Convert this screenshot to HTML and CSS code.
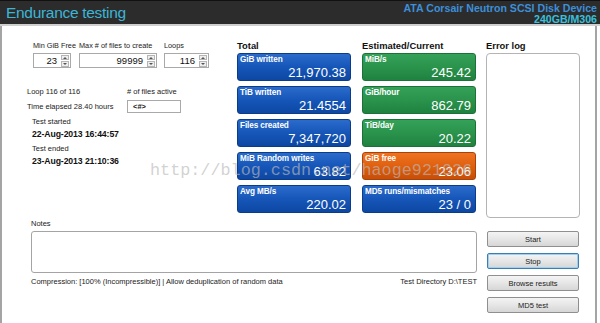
FILE: index.html
```html
<!DOCTYPE html>
<html>
<head>
<meta charset="utf-8">
<link rel="stylesheet" href="styles.css">
</head>
<body>
<div class="window">
  <header class="header">
    <div class="title">Endurance testing</div>
    <div class="device">
      <div class="device-name">ATA Corsair Neutron SCSI Disk Device</div>
      <div class="device-model">240GB/M306</div>
    </div>
  </header>
  <div class="content">
    <div class="top">
      <section class="left">
        <div class="params">
          <div class="param p1">
            <div class="lbl">Min GiB Free</div>
            <div class="spin"><span class="val">23</span><span class="arrows"><i class="up"></i><i class="down"></i></span></div>
          </div>
          <div class="param p2">
            <div class="lbl">Max # of files to create</div>
            <div class="spin"><span class="val">99999</span><span class="arrows"><i class="up"></i><i class="down"></i></span></div>
          </div>
          <div class="param p3">
            <div class="lbl">Loops</div>
            <div class="spin"><span class="val">116</span><span class="arrows"><i class="up"></i><i class="down"></i></span></div>
          </div>
        </div>
        <div class="status">
          <div class="lbl">Loop 116 of 116</div>
          <div class="lbl">&#35; of files active</div>
          <div class="lbl">Time elapsed 28.40 hours</div>
          <div class="active">&lt;#&gt;</div>
        </div>
        <div class="times">
          <div class="lbl">Test started</div>
          <div class="date">22-Aug-2013 16:44:57</div>
          <div class="lbl gap">Test ended</div>
          <div class="date">23-Aug-2013 21:10:36</div>
        </div>
      </section>
      <section class="col total">
        <h2>Total</h2>
        <div class="tile blue"><div class="t">GiB written</div><div class="v">21,970.38</div></div>
        <div class="tile blue"><div class="t">TiB written</div><div class="v">21.4554</div></div>
        <div class="tile blue"><div class="t">Files created</div><div class="v">7,347,720</div></div>
        <div class="tile blue"><div class="t">MiB Random writes</div><div class="v">63.82</div></div>
        <div class="tile blue"><div class="t">Avg MB/s</div><div class="v">220.02</div></div>
      </section>
      <section class="col est">
        <h2>Estimated/Current</h2>
        <div class="tile green"><div class="t">MiB/s</div><div class="v">245.42</div></div>
        <div class="tile green"><div class="t">GiB/hour</div><div class="v">862.79</div></div>
        <div class="tile green"><div class="t">TiB/day</div><div class="v">20.22</div></div>
        <div class="tile orange"><div class="t">GiB free</div><div class="v">23.06</div></div>
        <div class="tile blue"><div class="t">MD5 runs/mismatches</div><div class="v">23 / 0</div></div>
      </section>
      <section class="errors">
        <h2>Error log</h2>
        <div class="errbox"></div>
      </section>
    </div>
    <div class="bottom">
      <div class="notes">
        <div class="lbl">Notes</div>
        <div class="notebox"></div>
        <div class="info">
          <span class="lbl">Compression: [100% (Incompressible)] | Allow deduplication of random data</span>
          <span class="lbl">Test Directory D:\TEST</span>
        </div>
      </div>
      <div class="buttons">
        <button class="btn">Start</button>
        <button class="btn focus">Stop</button>
        <button class="btn">Browse results</button>
        <button class="btn">MD5 test</button>
      </div>
    </div>
    <div class="watermark">http://blog.csdn.net/haoge921026</div>
  </div>
</div>
</body>
</html>
```

FILE: styles.css
```css
* { box-sizing: border-box; }
html, body {
  margin: 0;
  padding: 0;
  width: 600px;
  height: 323px;
  overflow: hidden;
  background: #ffffff;
  font-family: "Liberation Sans", Arial, sans-serif;
  color: #111;
}
.window {
  width: 600px;
  height: 323px;
  display: flex;
  flex-direction: column;
}
.header {
  height: 26px;
  background: #2c2c2c;
  border-top: 1px solid #111;
  border-bottom: 2px solid #cfcfcf;
  display: flex;
  justify-content: space-between;
  align-items: flex-start;
  padding: 0 3px 0 6px;
}
.title {
  color: #3cb6d6;
  font-size: 15.5px;
  letter-spacing: -0.3px;
  line-height: 22px;
  padding-top: 1px;
}
.device {
  text-align: right;
  font-weight: bold;
  padding-top: 2px;
}
.device-name {
  color: #3d8fd8;
  font-size: 10.6px;
  line-height: 10px;
}
.device-model {
  color: #38c0dc;
  font-size: 10.6px;
  line-height: 10px;
  margin-top: 1px;
}
.content {
  flex: 1;
  position: relative;
  border-left: 2px solid #a4a4a4;
  border-right: 2px solid #a4a4a4;
  margin-right: 3px;
  padding: 13px 0 0 25px;
}
.top {
  display: flex;
  height: 179px;
}
.lbl {
  font-size: 7.5px;
  line-height: 12px;
  color: #222;
  white-space: nowrap;
}
.left {
  width: 210px;
}
.params {
  display: flex;
  padding-left: 6px;
}
.param .lbl { line-height: 14px; font-size: 7.3px; }
.p1 { width: 38px; margin-right: 8px; }
.p2 { width: 78px; margin-right: 7px; }
.p3 { width: 45px; }
.spin {
  height: 15px;
  border: 1px solid #a9a9a9;
  display: flex;
  align-items: center;
  justify-content: flex-end;
  padding-right: 1px;
}
.val {
  font-size: 9.5px;
  margin-right: 4px;
}
.arrows {
  width: 8px;
  height: 12px;
  display: flex;
  flex-direction: column;
  gap: 1px;
}
.arrows i {
  flex: 1;
  border: 1px solid #b5b5b5;
  background: #eeeeee;
  position: relative;
}
.arrows i::after {
  content: "";
  position: absolute;
  left: 1px;
  border-left: 2px solid transparent;
  border-right: 2px solid transparent;
}
.arrows .up::after { top: 1px; border-bottom: 2px solid #555; }
.arrows .down::after { top: 1px; border-top: 2px solid #555; }
.status {
  display: grid;
  grid-template-columns: 100px 54px;
  row-gap: 2px;
  margin-top: 18px;
  align-items: center;
}
.status .lbl:nth-child(3) { line-height: 13px; }
.active {
  height: 13px;
  border: 1px solid #a9a9a9;
  font-size: 7.5px;
  font-weight: bold;
  padding-left: 5px;
  line-height: 11px;
}
.times {
  margin-top: 3px;
  padding-left: 5px;
}
.times .gap { margin-top: 3px; }
.date {
  font-size: 8.7px;
  font-weight: bold;
  line-height: 12px;
  letter-spacing: -0.1px;
}
h2 {
  margin: 0 0 1px;
  font-size: 9.4px;
  line-height: 13px;
  font-weight: bold;
  color: #111;
}
.col { width: 114px; }
.total { margin-right: 11px; }
.est { margin-right: 10px; }
.tile {
  height: 28px;
  margin-bottom: 5px;
  border-radius: 3px;
  padding: 1px 4px 0 2px;
  color: #fff;
  display: flex;
  flex-direction: column;
  justify-content: space-between;
}
.tile .t {
  font-size: 8.2px;
  font-weight: bold;
  line-height: 9px;
  letter-spacing: -0.1px;
}
.tile .v {
  text-align: right;
  font-size: 13px;
  line-height: 15px;
}
.blue {
  background: linear-gradient(#2a6bcc, #1656b8 50%, #0d47a3);
  border: 1px solid #0b3c86;
}
.green {
  background: linear-gradient(#34a159, #2a934c 50%, #1f8240);
  border: 1px solid #1c7139;
}
.orange {
  background: linear-gradient(#ee7320, #e0600f 50%, #c84e06);
  border: 1px solid #a9420a;
}
.errors { width: 94px; }
.errbox {
  height: 165px;
  border: 1.5px solid #b4b4b4;
  border-radius: 4px;
}
.bottom {
  display: flex;
}
.notes {
  width: 446px;
  margin-left: 4px;
  margin-right: 10px;
}
.notebox {
  height: 42px;
  margin-top: 1px;
  border: 1px solid #a4a4a4;
  border-radius: 3px;
}
.info {
  display: flex;
  justify-content: space-between;
  margin-top: 3px;
}
.buttons {
  width: 92px;
  padding-top: 13px;
  display: flex;
  flex-direction: column;
  gap: 6px;
}
.btn {
  height: 16px;
  margin: 0;
  padding: 0;
  font-family: "Liberation Sans", Arial, sans-serif;
  font-size: 7.5px;
  color: #222;
  border: 1px solid #8f8f8f;
  border-radius: 2px;
  background: linear-gradient(#f4f4f4, #e6e6e6 50%, #d6d6d6);
}
.btn.focus {
  border: 1px solid #3a7eb4;
  box-shadow: inset 0 0 0 1px #9fd0ee;
}
.watermark {
  position: absolute;
  left: 148px;
  top: 135px;
  font-family: "Liberation Mono", "Courier New", monospace;
  font-size: 16.8px;
  line-height: 20px;
  color: rgba(185, 185, 185, 0.65);
  pointer-events: none;
  white-space: nowrap;
}
```
